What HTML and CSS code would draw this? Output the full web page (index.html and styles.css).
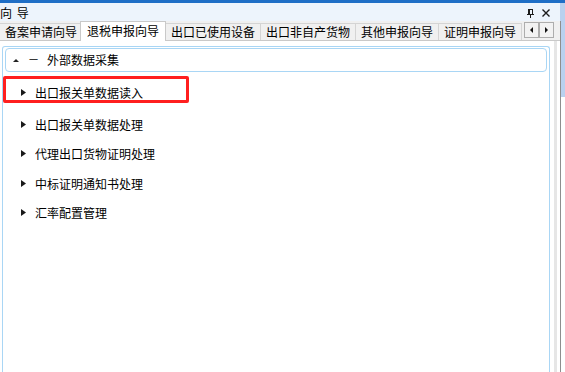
FILE: index.html
```html
<!DOCTYPE html>
<html lang="zh-CN">
<head>
    <meta charset="UTF-8">
    <meta name="viewport" content="width=device-width, initial-scale=1.0">
    <title>向导</title>
    <link rel="stylesheet" href="styles.css">
</head>
<body>
    <div class="strip"></div>
    <div class="frame">
        <div class="dock">
            <!-- Title bar -->
            <div class="titlebar">
                <span class="title">向 导</span>
                <span class="tools">
                    <svg class="pin" width="7" height="9" viewBox="0 0 7 9">
                        <path d="M1 0h5v1H1z M1 1h2v4H1z M5 1h1v4H5z M0 5h7v1H0z M3 6h1v3H3z" fill="#1b1b1b"/>
                    </svg>
                    <svg class="close" width="8" height="8" viewBox="0 0 8 8">
                        <path d="M0.5 0.5l7 7M7.5 0.5l-7 7" stroke="#1b1b1b" stroke-width="1.4" fill="none"/>
                    </svg>
                </span>
            </div>

            <!-- Tabs -->
            <div class="tabs">
                <div class="tab">备案申请向导</div>
                <div class="tab active">退税申报向导</div>
                <div class="tab">出口已使用设备</div>
                <div class="tab">出口非自产货物</div>
                <div class="tab">其他申报向导</div>
                <div class="tab">证明申报向导</div>
                <div class="scroller">
                    <button class="arrow arrow-left"></button>
                    <button class="arrow arrow-right"></button>
                </div>
            </div>

            <!-- Content -->
            <div class="content">
                <div class="panel">
                    <div class="group-head">
                        <span class="up"></span>
                        <span class="dash">一</span>
                        <span class="group-title">外部数据采集</span>
                    </div>
                    <ul class="items">
                        <li class="item first"><svg class="tri" width="5" height="7" viewBox="0 0 5 7"><path d="M0 0L5 3.5L0 7z" fill="#1a1a1a"/></svg>出口报关单数据读入</li>
                        <li class="item"><svg class="tri" width="5" height="7" viewBox="0 0 5 7"><path d="M0 0L5 3.5L0 7z" fill="#1a1a1a"/></svg>出口报关单数据处理</li>
                        <li class="item"><svg class="tri" width="5" height="7" viewBox="0 0 5 7"><path d="M0 0L5 3.5L0 7z" fill="#1a1a1a"/></svg>代理出口货物证明处理</li>
                        <li class="item"><svg class="tri" width="5" height="7" viewBox="0 0 5 7"><path d="M0 0L5 3.5L0 7z" fill="#1a1a1a"/></svg>中标证明通知书处理</li>
                        <li class="item"><svg class="tri" width="5" height="7" viewBox="0 0 5 7"><path d="M0 0L5 3.5L0 7z" fill="#1a1a1a"/></svg>汇率配置管理</li>
                    </ul>
                    <div class="highlight"></div>
                </div>
            </div>
        </div>
        <div class="side">
            <div class="side-top"></div>
            <div class="side-body">
                <div class="side-blue"></div>
            </div>
        </div>
    </div>
</body>
</html>
```

FILE: styles.css
```css
* {
    box-sizing: border-box;
}

html, body {
    margin: 0;
}

body {
    width: 565px;
    height: 372px;
    overflow: hidden;
    background: #fff;
    font-family: "Noto Sans CJK SC", "Liberation Sans", sans-serif;
    font-size: 12px;
    color: #000;
}

.strip {
    height: 3px;
    background: #1e6ec6;
}

.frame {
    display: flex;
    height: 369px;
}

.dock {
    width: 560px;
    display: flex;
    flex-direction: column;
}

/* title bar */
.titlebar {
    height: 18px;
    flex: none;
    background: #edf4fc;
    display: flex;
    align-items: center;
    justify-content: space-between;
    padding: 2px 10px 0 0;
    line-height: 14px;
}

.title {
    word-spacing: 2px;
}

.tools {
    display: flex;
    align-items: center;
    gap: 8px;
}

.tools svg {
    display: block;
}

/* tabs */
.tabs {
    height: 20px;
    flex: none;
    background: #f0f0f0;
    border-bottom: 1px solid #c9c9c9;
    display: flex;
    align-items: flex-end;
    padding-right: 6px;
}

.tab {
    height: 17px;
    padding: 0 5px;
    border-top: 1px solid #d4d4d4;
    border-right: 1px solid #d4d4d4;
    line-height: 16px;
    white-space: nowrap;
}

.tab.active {
    position: relative;
    height: 20px;
    margin: 0 0 -1px -3px;
    padding: 0 6px;
    background: #fff;
    border: 1px solid #c9c9c9;
    border-bottom: none;
    line-height: 18px;
}

.scroller {
    margin-left: auto;
    margin-bottom: 2px;
    display: flex;
}

.arrow {
    width: 15px;
    height: 16px;
    padding: 0;
    border: 1px solid #adadad;
    background: #f2f2f2;
    display: flex;
    align-items: center;
    justify-content: center;
}

.arrow::before {
    content: "";
    border-top: 3px solid transparent;
    border-bottom: 3px solid transparent;
}

.arrow-left::before {
    border-right: 3px solid #111;
}

.arrow-right::before {
    border-left: 3px solid #111;
}

/* content */
.content {
    flex: 1;
    margin-right: 3px;
    border-right: 3px solid #e6e6e6;
    padding: 5px 4px 0 2px;
}

.panel {
    position: relative;
    height: 100%;
    border: 1px solid #a9d6f5;
    border-bottom: none;
    border-radius: 3px 3px 0 0;
    padding: 1px 2px 0;
}

.group-head {
    height: 24px;
    border: 1px solid #a9d6f5;
    border-radius: 4px;
    display: flex;
    align-items: center;
    padding-left: 7px;
    line-height: 14px;
}

.up {
    width: 0;
    height: 0;
    border-left: 3px solid transparent;
    border-right: 3px solid transparent;
    border-bottom: 3px solid #222;
}

.dash {
    font-size: 9px;
    line-height: 10px;
    margin-left: 10px;
}

.group-title {
    margin-left: 9px;
}

.items {
    list-style: none;
    margin: 0;
    padding: 6px 0 0;
}

.item {
    height: 29.5px;
    display: flex;
    align-items: center;
    padding-left: 16px;
}

.item.first {
    margin-bottom: 2px;
}

.tri {
    display: block;
    margin-right: 9px;
}

.highlight {
    position: absolute;
    left: 0;
    top: 29px;
    width: 186px;
    height: 27px;
    border: 3px solid #ff1f1f;
    border-radius: 2px;
}

/* right neighbour pane */
.side {
    flex: 1;
    display: flex;
    flex-direction: column;
}

.side-top {
    height: 18px;
    background: #b9d1ef;
}

.side-body {
    flex: 1;
    border-left: 1px solid #8e8e8e;
}

.side-blue {
    height: 76px;
    background: #b9d1ef;
}
```
